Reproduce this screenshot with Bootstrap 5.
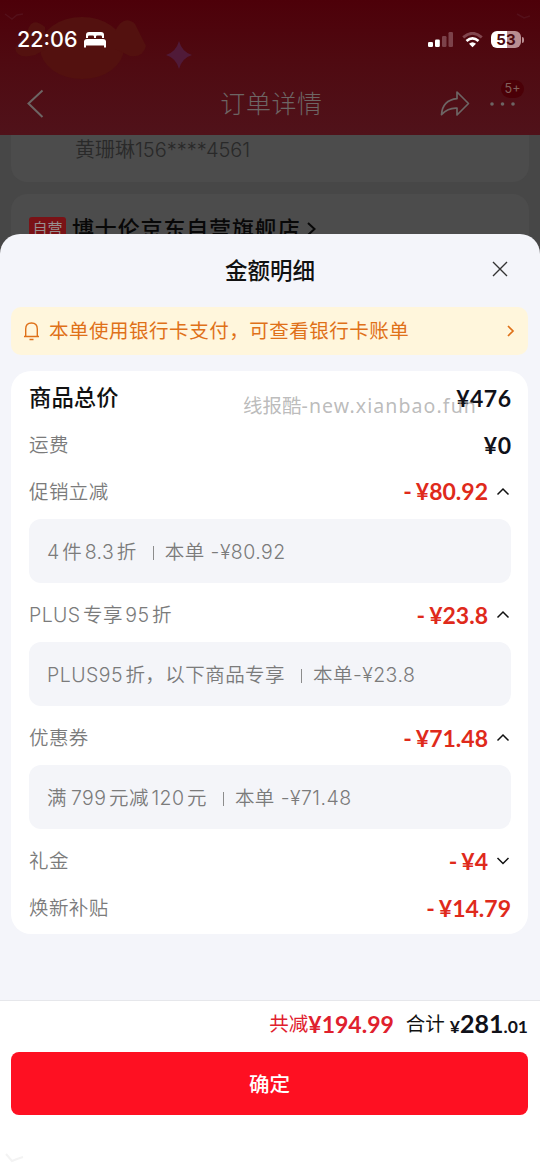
<!DOCTYPE html>
<html lang="zh-CN">
<head>
<meta charset="utf-8">
<meta name="viewport" content="width=device-width, initial-scale=1">
<title>金额明细</title>
<link rel="stylesheet" href="https://cdn.jsdelivr.net/npm/bootstrap@5.3.0/dist/css/bootstrap.min.css">
<style>
body{font-family:Inter,"Noto Sans CJK SC",sans-serif;background:#fff;overflow:hidden;line-height:1.2;color:#111}
svg{display:block;flex:none}
.phone{width:540px;height:1169px;overflow:hidden}
.behind{height:256px;background:#474747;overflow:hidden}
.top-red{height:135px;background:linear-gradient(#4d0009,#4f0a11 45%,#50121a);position:relative}
.art{position:absolute;left:0;top:0}
.statusbar{height:72px;padding:7px 16px 0 17px;position:relative;color:#fff}
.clock{font-size:21.5px;font-weight:500;letter-spacing:0}
.bed{margin-left:7px}
.batt{width:30px;height:17px;border-radius:6px;background:linear-gradient(90deg,#fff 54%,#b98d91 54%);color:#4c0a10;font-size:15px;font-weight:700;line-height:17px}
.battcap{width:2px;height:6px;border-radius:0 3px 3px 0;background:#b98d91;margin-left:1px}
.titlebar{height:63px;position:relative;color:#6d6564}
.titlebar .tt{font-size:25px;font-weight:300;letter-spacing:.6px;line-height:65px;padding-left:3px}
.dotbadge{position:absolute;left:501px;top:8px;width:23px;height:18px;border-radius:9px;background:#4b0007;color:#81605c;font-size:12.5px;line-height:18px}
.greycard{background:#4c4c4c;margin:0 11px}
.addr{height:47px;border-radius:0 0 16px 16px;padding:3px 0 0 64px;font-size:20px;font-weight:350;color:#292929}
.shop{height:80px;margin-top:12px;border-radius:16px;padding:22px 18px 0}
.selftag{width:37px;height:25px;background:#7a1216;border-radius:3px;color:#989090;font-size:15px;line-height:23px;margin-top:1px}
.shopname{font-size:22px;font-weight:500;color:#080808;letter-spacing:.85px;line-height:27px;margin-left:6px}
.sheet{margin-top:-22px;height:766px;border-radius:20px 20px 0 0;background:#f4f5fa;position:relative}
.sheethead{height:73px}
.sheethead .tt{font-size:22.5px;font-weight:500;line-height:74px}
.closer{position:absolute;left:492px;top:27px}
.notice{margin:0 12px 0 11px;height:48px;border-radius:10px;background:#fff6dc;color:#df7119;padding:0 12px}
.notice span{font-size:19.5px;letter-spacing:.52px;margin-left:9px;padding-top:2px}
.detail{margin:16px 12px 0 11px;height:563px;border-radius:20px;background:#fff;padding:4px 17px 0 18px}
.line{height:46.7px}
.line .lab{font-size:19.5px;color:#7b7b7b;font-weight:350;letter-spacing:.4px;padding-top:1px}
.line .lab.strong{font-size:22.3px;font-weight:500;color:#111;letter-spacing:.1px}
.amt{font-family:Lato,"Noto Sans CJK SC",sans-serif;font-weight:700;font-size:23px;color:#101119;padding-top:1px}
.amt.wide{letter-spacing:.5px;margin-right:-.5px}
.amt.off{color:#df2a1b}
.amt.red{color:#e0202d}
.amt i{font-style:normal;margin-right:4px}
.arrow{margin-left:8px;margin-right:1px}
.why{height:64px;margin:4px 0 8.500px;border-radius:12px;background:#f4f5f9;padding:3px 18px 0;color:#7b7b7b;font-size:19.5px;font-weight:350;letter-spacing:.45px;white-space:pre}
.num{margin:0 2.500px}
.num:first-child{margin-left:0}
.bar{width:1px;height:14px;background:#8c8c8c;margin:0 11px 0 16px}
.wm{position:absolute;left:243px;top:160px;font-family:"Noto Sans","Noto Sans CJK SC",sans-serif;font-size:19.5px;color:rgba(150,150,150,.65);white-space:nowrap}
.wm span{letter-spacing:1.1px}
.foot{height:169px;border-top:1px solid #e6e7eb;background:#fff;position:relative}
.sum{height:51px;padding:0 12px 4px}
.sum .cn{font-size:19.5px}
.sum .cn.red{color:#e0202d}
.total{margin-left:5px;line-height:30px}
.total small{font-size:17.5px}
.total b{font-size:25px;font-weight:700}
.ok{height:63px;margin:0 12px 0 11px;width:517px;border:0;border-radius:8px;background:#fe1022;color:#fff;font-size:20.5px;font-weight:500}
.ghost{position:absolute;left:5px;top:151px}
</style>
</head>
<body>
<div class="phone">
  <div class="behind">
    <header class="top-red">
      <svg class="art" width="540" height="135" viewBox="0 0 540 135">
        <g fill="#53110f"><ellipse cx="82" cy="48" rx="42" ry="31"/><path d="M115 31q9-17 20-7l11 22q-3 12-16 10l-15-7z"/><path d="M45 27q-13-11-17 3L15 48q2 12 20 7l11-6z"/></g>
        <path d="M179 41q3 11 13 14-10 3-13 14-3-11-13-14 10-3 13-14z" fill="#501a38"/>
        <path d="M5 14l7 5 5-4 6-1M517 14l7 4 6-2" fill="none" stroke="#54101a" stroke-width="1.500"/>
      </svg>
      <div class="statusbar d-flex align-items-center">
        <span class="clock">22:06</span>
        <svg class="bed" width="22" height="16" viewBox="0 0 22 16" fill="#fff"><path d="M2 6V3Q2 0 5 0h12q3 0 3 3v3h-2V4.700q0-1.200-1.200-1.200h-3.600q-1.200 0-1.200 1.200V6h-2V4.700q0-1.200-1.200-1.200H5.200Q4 3.500 4 4.700V6zM0 10q0-3 3-3h16q3 0 3 3v5.500h-2V13H2v2.500H0z"/><path d="M0 9.500h22v4H0z"/></svg>
        <div class="ms-auto d-flex align-items-center">
          <svg width="26" height="16" viewBox="0 0 26 16"><g fill="#fff"><rect y="10" width="5" height="5" rx="1.300"/><rect x="7" y="7.500" width="4.800" height="7.500" rx="1.300"/></g><g fill="#7c424a"><rect x="14" y="4" width="4.500" height="11" rx="1.200"/><rect x="20.500" width="4.500" height="15" rx="1.200"/></g></svg>
          <svg class="ms-2" width="21" height="16" viewBox="0 0 21 16" fill="none"><path d="M1.200 5.400Q10.500-2.800 19.800 5.400" stroke="#81464e" stroke-width="2.800"/><path d="M4.500 8.900Q10.500 3.700 16.500 8.900" stroke="#fff" stroke-width="2.700"/><path d="M7 11.800Q10.500 8.700 14 11.800L10.500 15.300z" fill="#fff"/></svg>
          <div class="batt ms-2 text-center">53</div><div class="battcap"></div>
        </div>
      </div>
      <div class="titlebar text-center">
        <svg class="art" width="540" height="63" viewBox="0 72 540 63" fill="none" stroke="#6d6564"><path d="M42.500 90.500L28.500 103.500l14 13.500" stroke-width="2"/><path d="M457 92l11.500 11.500L457 115v-6.800q-9-.500-15.500 6.500 1-14.500 15.500-16z" stroke-width="1.700" stroke-linejoin="round"/><g fill="#6d6564" stroke="none"><circle cx="492" cy="104" r="1.800"/><circle cx="502.500" cy="104" r="1.800"/><circle cx="513" cy="104" r="1.800"/></g></svg>
        <span class="tt">订单详情</span>
        <span class="dotbadge">5+</span>
      </div>
    </header>
    <div class="greycard addr">黄珊琳156****4561</div>
    <div class="greycard shop d-flex align-items-start">
      <span class="selftag text-center">自营</span>
      <span class="shopname">博士伦京东自营旗舰店</span>
      <svg class="mt-1 ms-1" width="12" height="18" viewBox="0 0 12 18"><path d="M3 3l6.500 6L3 15" fill="none" stroke="#080808" stroke-width="2"/></svg>
    </div>
  </div>

  <main class="sheet">
    <div class="sheethead text-center"><span class="tt">金额明细</span>
      <svg class="closer" width="16" height="16" viewBox="0 0 16 16"><path d="M1 1l14 14M15 1L1 15" stroke="#333" stroke-width="1.400"/></svg>
    </div>
    <div class="notice d-flex align-items-center">
      <svg width="17" height="20" viewBox="0 0 17 20" fill="none" stroke="#df7119" stroke-width="1.400"><path d="M1 15.500h15M2.700 15V8q0-6 5.800-6t5.800 6v7M6.500 18.500h4"/></svg>
      <span>本单使用银行卡支付，可查看银行卡账单</span>
      <svg class="ms-auto" width="10" height="14" viewBox="0 0 10 14"><path d="M2 2l5 5-5 5" fill="none" stroke="#df7119" stroke-width="1.700"/></svg>
    </div>
    <section class="detail">
      <div class="line d-flex align-items-center justify-content-between"><span class="lab strong">商品总价</span><span class="amt wide">¥476</span></div>
      <div class="line d-flex align-items-center justify-content-between"><span class="lab">运费</span><span class="amt wide">¥0</span></div>
      <div class="line d-flex align-items-center"><span class="lab me-auto">促销立减</span><span class="amt off"><i>-</i>¥80.92</span><svg class="arrow" width="14" height="10" viewBox="0 0 14 10"><path d="M1.500 7.500L7 2l5.500 5.500" fill="none" stroke="#111" stroke-width="1.500"/></svg></div>
      <div class="why d-flex align-items-center"><div><span class="num">4</span>件<span class="num">8.3</span>折</div><span class="bar"></span><div>本单 -¥80.92</div></div>
      <div class="line d-flex align-items-center"><span class="lab me-auto"><span class="num">PLUS</span>专享<span class="num">95</span>折</span><span class="amt off"><i>-</i>¥23.8</span><svg class="arrow" width="14" height="10" viewBox="0 0 14 10"><path d="M1.500 7.500L7 2l5.500 5.500" fill="none" stroke="#111" stroke-width="1.500"/></svg></div>
      <div class="why d-flex align-items-center"><div><span class="num">PLUS95</span>折，以下商品专享</div><span class="bar"></span><div>本单-¥23.8</div></div>
      <div class="line d-flex align-items-center"><span class="lab me-auto">优惠券</span><span class="amt off"><i>-</i>¥71.48</span><svg class="arrow" width="14" height="10" viewBox="0 0 14 10"><path d="M1.500 7.500L7 2l5.500 5.500" fill="none" stroke="#111" stroke-width="1.500"/></svg></div>
      <div class="why d-flex align-items-center"><div>满<span class="num ms-1">799</span>元减<span class="num">120</span>元</div><span class="bar"></span><div>本单 -¥71.48</div></div>
      <div class="line d-flex align-items-center"><span class="lab me-auto">礼金</span><span class="amt off"><i>-</i>¥4</span><svg class="arrow" width="14" height="10" viewBox="0 0 14 10"><path d="M1.500 2L7 7.500 12.500 2" fill="none" stroke="#111" stroke-width="1.500"/></svg></div>
      <div class="line d-flex align-items-center justify-content-between"><span class="lab">焕新补贴</span><span class="amt off"><i>-</i>¥14.79</span></div>
    </section>
    <div class="wm">线报酷<span>-new.xianbao.fun</span></div>
  </main>

  <footer class="foot">
    <div class="sum d-flex align-items-center justify-content-end">
      <span class="cn red">共减</span><span class="amt red">¥194.99</span>
      <span class="cn ms-2 ps-1">合计</span><span class="amt total"><small>¥</small><b>281</b><small>.01</small></span>
    </div>
    <button class="ok btn d-flex align-items-center justify-content-center p-0 pt-1">确定</button>
    <svg class="ghost" width="20" height="12" viewBox="0 0 20 12"><path d="M1 2l6 7 5-2 6-2" fill="none" stroke="#f3f3f3" stroke-width="2"/></svg>
  </footer>
</div>
<script src="https://cdn.jsdelivr.net/npm/bootstrap@5.3.0/dist/js/bootstrap.bundle.min.js"></script>
</body>
</html>
